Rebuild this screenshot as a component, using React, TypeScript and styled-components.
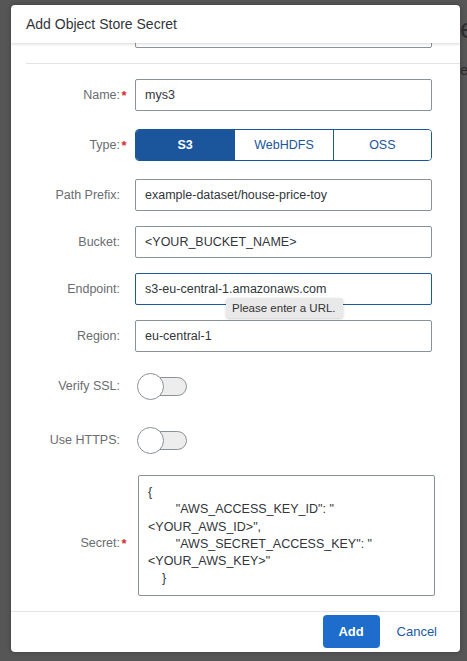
import React, { useLayoutEffect, useRef } from "react";
import styled, { createGlobalStyle } from "styled-components";

const FONT = `"Liberation Sans", Arial, sans-serif`;

const GlobalStyle = createGlobalStyle`
  html, body { margin: 0; padding: 0; }
  body {
    background: #565656;
    font-family: ${FONT};
    overflow: hidden;
  }
`;

const Screen = styled.div`
  display: flex;
  align-items: flex-start;
  width: 467px;
  height: 661px;
  padding: 5px 0 0 11px;
  box-sizing: border-box;
  overflow: hidden;
`;

const Peek = styled.div`
  flex: none;
  width: 7px;
  overflow: hidden;
  display: flex;
  flex-direction: column;
  color: #2c2c2c;
`;

const PeekText = styled.span<{ $size: number; $top: number }>`
  font-size: ${(p) => p.$size}px;
  line-height: 1;
  margin-top: ${(p) => p.$top}px;
  white-space: nowrap;
`;

const Dialog = styled.section`
  flex: none;
  width: 449px;
  height: 647px;
  background: #fff;
  border-radius: 4px;
  overflow: hidden;
  display: flex;
  flex-direction: column;
  box-shadow: 0 0 4px rgba(0, 0, 0, 0.3);
`;

const Header = styled.header`
  flex: none;
  height: 38px;
  display: flex;
  align-items: center;
  padding: 0 15px;
  position: relative;
  z-index: 1;
  box-shadow: 0 1px 3px rgba(0, 0, 0, 0.16);
  font-size: 14px;
  color: #32363a;
`;

const Body = styled.div`
  flex: 1;
  min-height: 0;
  overflow-y: scroll;
  &::-webkit-scrollbar {
    width: 10px;
  }
  &::-webkit-scrollbar-track {
    background: transparent;
  }
  &::-webkit-scrollbar-thumb {
    background: #9b9b9b;
    border-radius: 5px;
    border-right: 2px solid transparent;
    background-clip: padding-box;
  }
`;

const Form = styled.div`
  display: flex;
  flex-direction: column;
  padding: 10px 0 15px 15px;
`;

const Row = styled.div<{ $mb?: number }>`
  display: grid;
  grid-template-columns: 102px 297px;
  column-gap: 7px;
  align-items: center;
  min-height: 32px;
  margin-bottom: ${(p) => p.$mb ?? 15}px;
`;

const Label = styled.label<{ $offset?: number }>`
  display: flex;
  justify-content: flex-end;
  align-items: center;
  font-size: 12.5px;
  color: #6a6d70;
  padding-top: ${(p) => p.$offset ?? 0}px;
  white-space: nowrap;
`;

const Req = styled.span<{ $show?: boolean }>`
  flex: none;
  width: 8px;
  text-align: center;
  color: #d0312d;
  font-size: 13px;
  font-weight: bold;
  visibility: ${(p) => (p.$show ? "visible" : "hidden")};
`;

const Divider = styled.hr`
  border: 0;
  border-top: 1px solid #e4e4e4;
  height: 0;
  margin: 0 0 15px 0;
`;

const Field = styled.div`
  position: relative;
  display: flex;
`;

const TextInput = styled.input<{ $focused?: boolean }>`
  box-sizing: border-box;
  width: 100%;
  height: 32px;
  border: 1px solid ${(p) => (p.$focused ? "#1b5aa0" : "#89919a")};
  border-radius: 2px;
  padding: 0 9px;
  font: 12.5px ${FONT};
  color: #32363a;
  background: #fff;
  outline: none;
`;

const Tooltip = styled.div`
  position: absolute;
  left: 91px;
  top: 25px;
  height: 20px;
  padding: 0 7px 0 6px;
  display: flex;
  align-items: center;
  background: #e9e9e9;
  border-radius: 3px;
  box-shadow: 0 1px 3px rgba(0, 0, 0, 0.2);
  font-size: 11.5px;
  color: #333;
  white-space: nowrap;
`;

const Segmented = styled.div`
  box-sizing: border-box;
  display: grid;
  grid-template-columns: repeat(3, 1fr);
  height: 32px;
  border: 1px solid #1b559c;
  border-radius: 4px;
  overflow: hidden;
`;

const Segment = styled.button<{ $selected?: boolean; $first?: boolean }>`
  border: 0;
  border-left: ${(p) => (p.$first ? "0" : "1px solid #1b559c")};
  background: ${(p) => (p.$selected ? "#1b559c" : "#fff")};
  color: ${(p) => (p.$selected ? "#fff" : "#1b559c")};
  font: ${(p) => (p.$selected ? "bold" : "normal")} 12.5px ${FONT};
  padding: 0;
  cursor: pointer;
`;

const Switch = styled.div`
  display: grid;
  align-items: center;
  width: 50px;
  height: 27px;
  margin-left: 2px;
`;

const Track = styled.span`
  grid-area: 1 / 1;
  justify-self: end;
  width: 40px;
  height: 19px;
  box-sizing: border-box;
  border: 1px solid #8a9095;
  border-radius: 10px;
  background: #ededed;
`;

const Knob = styled.span`
  grid-area: 1 / 1;
  justify-self: start;
  width: 27px;
  height: 27px;
  box-sizing: border-box;
  border: 1px solid #8a9095;
  border-radius: 50%;
  background: #fff;
`;

const TextArea = styled.textarea`
  box-sizing: border-box;
  width: 297px;
  height: 121px;
  margin-left: 3px;
  border: 1px solid #89919a;
  border-radius: 2px;
  padding: 8px 9px;
  font: 12.5px/17.3px ${FONT};
  color: #32363a;
  resize: none;
  overflow: hidden;
  white-space: pre;
  outline: none;
`;

const Footer = styled.footer`
  flex: none;
  height: 41px;
  box-sizing: border-box;
  border-top: 1px solid #e4e4e4;
  display: flex;
  align-items: center;
  justify-content: flex-end;
  gap: 9px;
  padding: 0 15px 2px;
`;

const Button = styled.button<{ $primary?: boolean }>`
  height: 33px;
  min-width: ${(p) => (p.$primary ? "57px" : "0")};
  padding: 0 8px;
  border: 0;
  border-radius: 4px;
  background: ${(p) => (p.$primary ? "#1e6ccb" : "transparent")};
  color: ${(p) => (p.$primary ? "#fff" : "#1b5aa6")};
  font: ${(p) => (p.$primary ? "bold" : "normal")} 13px ${FONT};
  cursor: pointer;
`;

const SECRET = [
  "{",
  '        "AWS_ACCESS_KEY_ID": "',
  '<YOUR_AWS_ID>",',
  '        "AWS_SECRET_ACCESS_KEY": "',
  '<YOUR_AWS_KEY>"',
  "    }",
].join("\n");

type TextRowProps = {
  label: string;
  value: string;
  required?: boolean;
  mb?: number;
  focused?: boolean;
  tooltip?: string;
};

function TextRow({ label, value, required, mb, focused, tooltip }: TextRowProps) {
  return (
    <Row $mb={mb}>
      <Label>
        {label}
        <Req $show={required}>*</Req>
      </Label>
      <Field>
        <TextInput readOnly value={value} $focused={focused} />
        {tooltip && <Tooltip>{tooltip}</Tooltip>}
      </Field>
    </Row>
  );
}

function SwitchRow({ label, mb }: { label: string; mb?: number }) {
  return (
    <Row $mb={mb}>
      <Label>
        {label}
        <Req>*</Req>
      </Label>
      <Field>
        <Switch role="switch" aria-checked="false">
          <Track />
          <Knob />
        </Switch>
      </Field>
    </Row>
  );
}

export default function App() {
  const bodyRef = useRef<HTMLDivElement>(null);

  useLayoutEffect(() => {
    const el = bodyRef.current;
    if (el) el.scrollTop = el.scrollHeight;
  }, []);

  return (
    <>
      <GlobalStyle />
      <Screen>
        <Dialog>
          <Header>Add Object Store Secret</Header>
          <Body ref={bodyRef}>
            <Form>
              <TextRow label="" value="" />
              <Divider />
              <TextRow label="Name:" value="mys3" required mb={18} />
              <Row $mb={18}>
                <Label>
                  Type:
                  <Req $show>*</Req>
                </Label>
                <Segmented>
                  <Segment $selected $first>
                    S3
                  </Segment>
                  <Segment>WebHDFS</Segment>
                  <Segment>OSS</Segment>
                </Segmented>
              </Row>
              <TextRow label="Path Prefix:" value="example-dataset/house-price-toy" />
              <TextRow label="Bucket:" value="<YOUR_BUCKET_NAME>" />
              <TextRow
                label="Endpoint:"
                value="s3-eu-central-1.amazonaws.com"
                focused
                tooltip="Please enter a URL."
              />
              <TextRow label="Region:" value="eu-central-1" mb={18} />
              <SwitchRow label="Verify SSL:" mb={22} />
              <SwitchRow label="Use HTTPS:" mb={19} />
              <Row $mb={0}>
                <Label $offset={15}>
                  Secret:
                  <Req $show>*</Req>
                </Label>
                <TextArea readOnly wrap="off" value={SECRET} />
              </Row>
            </Form>
          </Body>
          <Footer>
            <Button $primary>Add</Button>
            <Button>Cancel</Button>
          </Footer>
        </Dialog>
        <Peek>
          <PeekText $size={27} $top={11}>e</PeekText>
          <PeekText $size={15} $top={19}>e</PeekText>
        </Peek>
      </Screen>
    </>
  );
}
